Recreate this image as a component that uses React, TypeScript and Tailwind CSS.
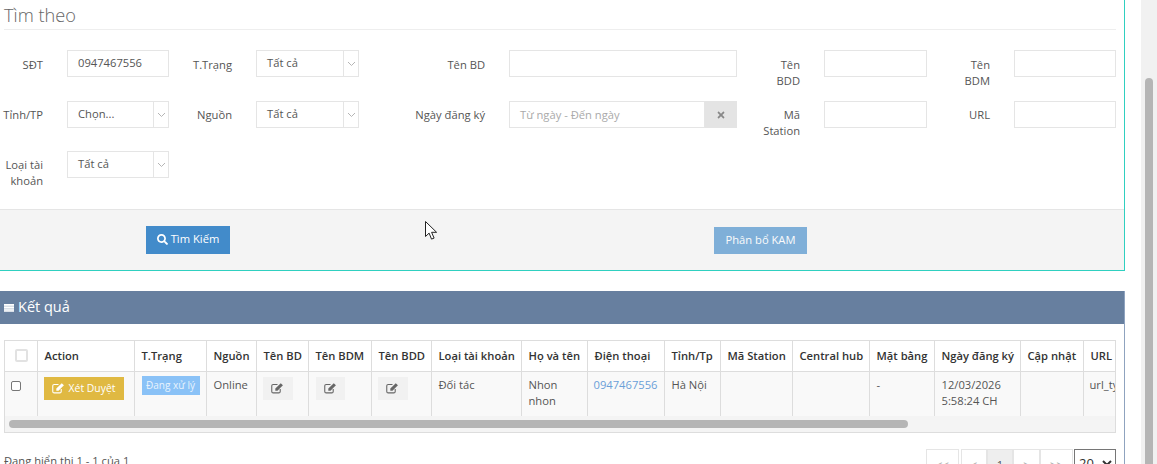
import { FaSearch, FaTimes } from 'react-icons/fa';

const columns = [
  { title: 'Action', width: 97 },
  { title: 'T.Trạng', width: 72 },
  { title: 'Nguồn', width: 50 },
  { title: 'Tên BD', width: 52 },
  { title: 'Tên BDM', width: 63 },
  { title: 'Tên BDD', width: 60 },
  { title: 'Loại tài khoản', width: 90 },
  { title: 'Họ và tên', width: 66 },
  { title: 'Điện thoại', width: 77 },
  { title: 'Tỉnh/Tp', width: 56 },
  { title: 'Mã Station', width: 72 },
  { title: 'Central hub', width: 77 },
  { title: 'Mặt bằng', width: 65 },
  { title: 'Ngày đăng ký', width: 86 },
  { title: 'Cập nhật', width: 63 },
  { title: 'URL', width: 80 },
];

const Label = ({ children, first }: { children: React.ReactNode; first?: boolean }) => (
  <label className={`block pr-6 text-right leading-4 text-[#555] ${first ? 'pt-[7px]' : 'pt-[6px]'}`}>{children}</label>
);

const TextBox = ({ value }: { value?: string }) => (
  <div className="h-[27px] border border-[#e5e5e5] bg-white px-[10px] leading-[24px] text-[#555]">{value}</div>
);

const SelectBox = ({ value }: { value: string }) => (
  <div className="flex h-[27px] border border-[#e5e5e5] bg-white text-[#555]">
    <span className="flex-1 px-[10px] leading-[24px]">{value}</span>
    <span className="flex w-[15px] items-center justify-center border-l border-[#e5e5e5]">
      <svg width="9" height="6" viewBox="0 0 9 6" fill="none" stroke="#b5b5b5" strokeWidth="1">
        <path d="M1 1l3.5 3.5L8 1" />
      </svg>
    </span>
  </div>
);

// icon bút + ô vuông
const EditIcon = () => (
  <svg width="13" height="12" viewBox="0 0 12 11" fill="none">
    <path d="M8.5 6.5v2.2c0 .8-.5 1.3-1.3 1.3H2c-.8 0-1.3-.5-1.3-1.3V3.5c0-.8.5-1.3 1.3-1.3h4" stroke="currentColor" strokeWidth="1" />
    <path d="M4 6l5-5 2 2-5 5H4z" fill="currentColor" />
  </svg>
);

const EditButton = ({ width }: { width: string }) => (
  <div className={`flex h-[23px] items-center justify-center bg-[#f1f1f1] text-[#666] ${width}`}>
    <EditIcon />
  </div>
);

const PageLink = ({ children, active, width }: { children: string; active?: boolean; width: string }) => (
  <div className={`h-[28px] border border-[#e5e5e5] pt-[7px] text-center leading-4 ${width} ${active ? 'bg-[#eee] text-[#555]' : 'bg-white text-[#aaa]'}`}>
    {children}
  </div>
);

export default function App() {
  return (
    <div className="relative flex h-[464px] w-[1157px] overflow-hidden bg-white font-['Open_Sans',sans-serif] text-[11.2px] text-[#555]">
      <div className="w-[1141px] shrink-0">
        {/* Tìm theo */}
        <div className="w-[1125px] border-r border-b border-[#2fd0c0]">
          <div className="px-1 pr-2">
            <div className="h-[30px] border-b border-[#eee] text-[18.2px] leading-[30px] font-light text-[#666]">Tìm theo</div>
          </div>
          <div className="grid h-[179px] grid-cols-[67px_102px_87px_103px_150px_228px_87px_103px_87px_102px] grid-rows-[51px_50px_auto] pt-5">
            <Label first>SĐT</Label>
            <TextBox value="0947467556" />
            <Label first>T.Trạng</Label>
            <SelectBox value="Tất cả" />
            <Label first>Tên BD</Label>
            <TextBox />
            <Label first>Tên<br />BDD</Label>
            <TextBox />
            <Label first>Tên<br />BDM</Label>
            <TextBox />

            <Label>Tỉnh/TP</Label>
            <SelectBox value="Chọn..." />
            <Label>Nguồn</Label>
            <SelectBox value="Tất cả" />
            <Label>Ngày đăng ký</Label>
            <div className="flex h-[27px]">
              <div className="flex-1 border border-[#e5e5e5] bg-white px-[10px] leading-[25px] text-[#aaa]">Từ ngày - Đến ngày</div>
              <div className="flex w-[32px] items-center justify-center bg-[#e4e4e4] text-[#888]">
                <FaTimes className="text-[10px]" />
              </div>
            </div>
            <Label>Mã<br />Station</Label>
            <TextBox />
            <Label>URL</Label>
            <TextBox />

            <Label>Loại tài<br />khoản</Label>
            <SelectBox value="Tất cả" />
          </div>
          <div className="relative flex h-[61px] items-start border-t border-[#e5e5e5] bg-[#f4f4f4] pl-[146px] pt-4">
            <button className="flex h-[28px] w-[84px] items-center justify-center gap-[3px] bg-[#428bca] pb-px font-medium text-white">
              <FaSearch className="text-[11px]" />
              Tìm Kiếm
            </button>
            <button className="mt-px ml-[484px] h-[27px] w-[93px] bg-[#428bca] font-medium text-white opacity-65">Phân bổ KAM</button>
          </div>
        </div>

        {/* Kết quả */}
        <div className="mt-5 w-[1125px] border-r border-[#8fa3bf]">
          <div className="flex h-[33px] items-center gap-1 bg-[#677f9f] pb-[2px] pl-1 text-[14.5px] text-white">
            <svg width="10" height="8" viewBox="0 0 10 8" fill="#fff" className="mt-[3px]">
              <rect width="10" height="8" opacity=".75" />
              <rect width="10" height="1.5" />
              <rect y="3" width="10" height="1" />
              <rect y="5.5" width="10" height="1" />
            </svg>
            Kết quả
          </div>
          <div className="pt-4 pr-2 pl-1">
            <div className="h-[93px] overflow-hidden border border-[#ddd] bg-[#f4f4f4]">
              <div className="h-[75px] overflow-hidden">
                <table className="w-[1138px] table-fixed border-collapse">
                  <colgroup>
                    <col className="w-[32px]" />
                    {columns.map((c) => (
                      <col key={c.title} style={{ width: c.width }} />
                    ))}
                  </colgroup>
                  <thead>
                    <tr className="h-[30px] bg-white">
                      <th className="border-r border-b border-[#ddd] pl-[10px] text-left">
                        <div className="h-[13px] w-[13px] rounded-[2px] border-2 border-[#e2e2e2]" />
                      </th>
                      {columns.map((c) => (
                        <th key={c.title} className="overflow-hidden border-r border-b border-[#ddd] pt-px pl-[7px] text-left font-semibold whitespace-nowrap text-[#333]">
                          {c.title}
                        </th>
                      ))}
                    </tr>
                  </thead>
                  <tbody>
                    <tr className="h-[60px] bg-[#f9f9f9] align-top leading-4">
                      <td className="border-r border-[#ddd] pt-[9px] pl-[6px]">
                        <div className="h-[10px] w-[10px] rounded-[2px] border border-[#777] bg-white" />
                      </td>
                      <td className="border-r border-[#ddd] pt-[5px] pl-[6px]">
                        <div className="flex h-[23px] w-[80px] items-center justify-center gap-[4px] bg-[#e0b942] text-[10.4px] font-medium text-white">
                          <EditIcon />
                          Xét Duyệt
                        </div>
                      </td>
                      <td className="border-r border-[#ddd] pt-[4px] pl-[7px]">
                        <div className="h-[19px] w-[58px] bg-[#8ac2f7] text-center text-[10px] leading-[18px] whitespace-nowrap text-[#e8f3fd]">Đang xử lý</div>
                      </td>
                      <td className="border-r border-[#ddd] pt-[5px] pl-[7px]">Online</td>
                      <td className="border-r border-[#ddd] pt-[5px] pl-[6px]"><EditButton width="w-[30px]" /></td>
                      <td className="border-r border-[#ddd] pt-[5px] pl-[7px]"><EditButton width="w-[29px]" /></td>
                      <td className="border-r border-[#ddd] pt-[5px] pl-[6px]"><EditButton width="w-[30px]" /></td>
                      <td className="border-r border-[#ddd] pt-[5px] pl-[7px]">Đối tác</td>
                      <td className="border-r border-[#ddd] pt-[5px] pl-[7px]">Nhon nhon</td>
                      <td className="border-r border-[#ddd] pt-[5px] pl-[6px] text-[#6a9fd8]">0947467556</td>
                      <td className="border-r border-[#ddd] pt-[5px] pl-[7px]">Hà Nội</td>
                      <td className="border-r border-[#ddd]"></td>
                      <td className="border-r border-[#ddd]"></td>
                      <td className="border-r border-[#ddd] pt-[5px] pl-[7px]">-</td>
                      <td className="border-r border-[#ddd] pt-[5px] pl-[7px]">12/03/2026 5:58:24 CH</td>
                      <td className="border-r border-[#ddd]"></td>
                      <td className="overflow-hidden pt-[5px] pl-[6px]">url_type</td>
                    </tr>
                  </tbody>
                </table>
              </div>
              <div className="mt-1 ml-1 h-2 w-[899px] rounded-full bg-[#b5b5b5]" />
            </div>
            <div className="mt-4 flex items-start justify-between">
              <span className="pt-[4px] leading-4">Đang hiển thị 1 - 1 của 1</span>
              <div className="flex items-start">
                <PageLink width="w-[33px] mr-[2px]">&lt;&lt;</PageLink>
                <PageLink width="w-[26px]">&lt;</PageLink>
                <PageLink active width="w-[26px]">1</PageLink>
                <PageLink width="w-[27px]">&gt;</PageLink>
                <PageLink width="w-[33px]">&gt;&gt;</PageLink>
                <select defaultValue="20" className="ml-px h-[28px] w-[42px] appearance-auto border border-[#767676] bg-white text-[13px] text-[#333]">
                  <option>20</option>
                </select>
              </div>
            </div>
          </div>
        </div>
      </div>

      {/* thanh cuộn trang */}
      <div className="w-4 bg-[#f1f1f1] pl-1">
        <div className="mt-[78px] h-[386px] w-2 rounded-t-full bg-[#b5b5b5]" />
      </div>

      {/* con trỏ chuột */}
      <svg className="absolute top-[221px] left-[425px]" width="13" height="20" viewBox="0 0 13 20" fill="#fff" stroke="#222" strokeWidth="1">
        <path d="M.5.5v15l3.6-3.4 2.4 6 2.6-1-2.5-5.8h5z" />
      </svg>
    </div>
  );
}
